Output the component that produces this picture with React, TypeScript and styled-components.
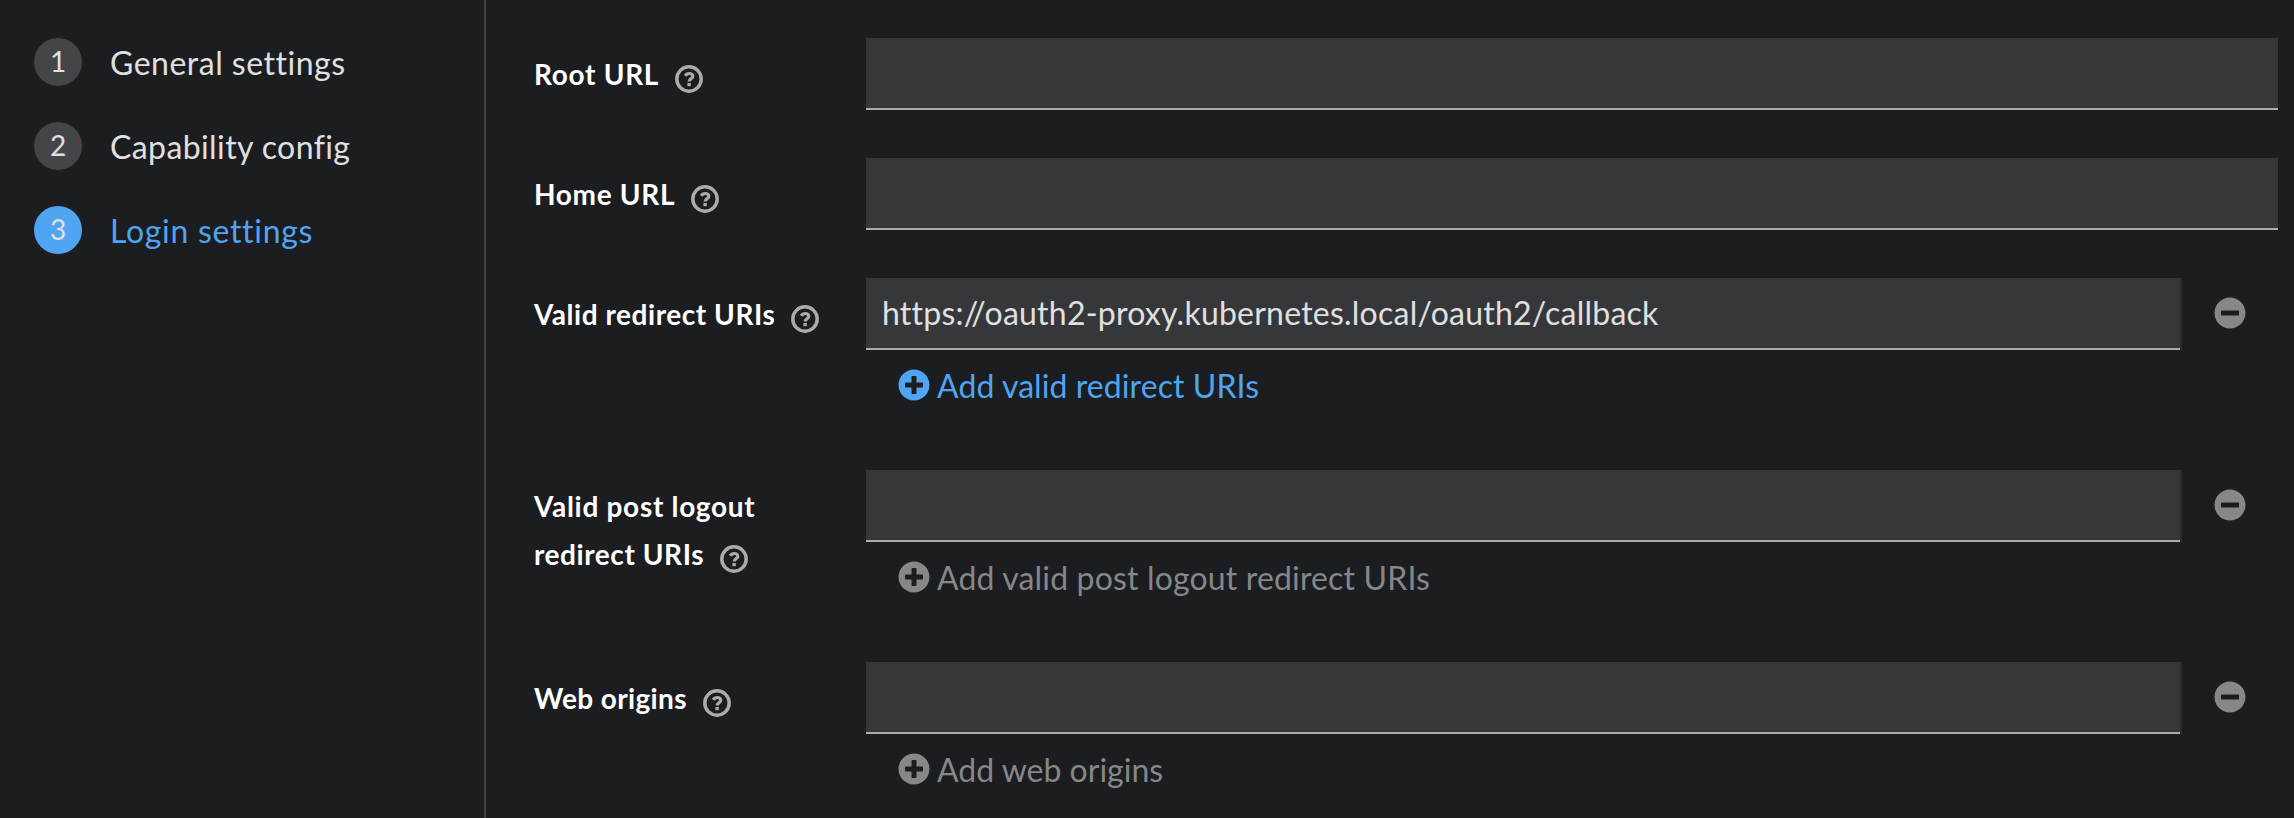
import React from "react";
import styled, { createGlobalStyle } from "styled-components";
import { FaMinusCircle, FaPlusCircle } from "react-icons/fa";

const color = {
  page: "#1b1d21",
  field: "#36373a",
  fieldLine: "#aaabac",
  divider: "#444548",
  text: "#e0e0e0",
  label: "#ffffff",
  accent: "#4fa5f1",
  muted: "#868789",
};

const GlobalStyle = createGlobalStyle`
  * { box-sizing: border-box; }
  body {
    margin: 0;
    background: ${color.page};
    color: ${color.text};
    font-family: Lato, "Liberation Sans", sans-serif;
    font-size: 32px;
    font-variant-ligatures: none;
  }
`;

const Page = styled.div`
  display: flex;
  height: 818px;
  overflow: hidden;
`;

const WizardNav = styled.ol`
  flex: none;
  width: 486px;
  margin: 0;
  padding: 38px 0 0 34px;
  border-right: 2px solid ${color.divider};
  display: flex;
  flex-direction: column;
  gap: 36px;
  list-style: none;
`;

const Step = styled.li<{ $current?: boolean }>`
  display: flex;
  align-items: center;
  gap: 28px;
  height: 48px;
  color: ${(p) => (p.$current ? color.accent : color.text)};
`;

const StepNumber = styled.span<{ $current?: boolean }>`
  width: 48px;
  height: 48px;
  border-radius: 50%;
  background: ${(p) => (p.$current ? color.accent : color.divider)};
  color: ${color.text};
  font-size: 28px;
  line-height: 47px;
  text-align: center;
`;

const StepName = styled.span<{ $tracking: number }>`
  line-height: 48px;
  padding-top: 1px;
  letter-spacing: ${(p) => p.$tracking}px;
  white-space: nowrap;
`;

const Form = styled.form`
  flex: 1;
  min-width: 0;
  padding: 38px 16px 0 48px;
  display: flex;
  flex-direction: column;
  gap: 48px;
`;

const FormGroup = styled.div<{ $multi?: boolean }>`
  display: grid;
  grid-template-columns: 332px 1fr;
  flex: none;
  height: ${(p) => (p.$multi ? 144 : 72)}px;
`;

const Label = styled.label`
  padding-top: 12px;
  color: ${color.label};
  font-size: 28px;
  font-weight: 700;
  line-height: 48px;
  white-space: nowrap;
`;

const LabelLine = styled.span<{ $tracking: number }>`
  display: flex;
  letter-spacing: ${(p) => p.$tracking}px;
`;

const HelpGlyph = styled.svg`
  width: 28px;
  height: 28px;
  margin: 15px 0 0 16px;
  color: ${color.fieldLine};
`;

const Control = styled.div`
  min-width: 0;
`;

const InputRow = styled.div`
  display: flex;
`;

const TextInput = styled.input<{ $tracking?: number }>`
  flex: 1;
  min-width: 0;
  height: 72px;
  padding: 0 16px 1px;
  border: 0;
  border-bottom: 2px solid ${color.fieldLine};
  border-radius: 0;
  outline: 0;
  background: ${color.field};
  color: ${color.text};
  font: inherit;
  letter-spacing: ${(p) => p.$tracking ?? 0}px;
`;

const RemoveButton = styled.button`
  width: 98px;
  height: 72px;
  padding: 0 0 2px 32px;
  border: 0;
  border-left: 2px solid #292b2e;
  background: none;
  color: ${color.muted};
  display: flex;
  align-items: center;
  font-size: 32px;
`;

const AddButton = styled.button<{ $enabled?: boolean; $tracking: number }>`
  display: flex;
  align-items: center;
  gap: 7px;
  height: 50px;
  margin: 10px 0 0 32px;
  padding: 0;
  border: 0;
  background: none;
  color: ${(p) => (p.$enabled ? color.accent : color.muted)};
  font: inherit;
  letter-spacing: ${(p) => p.$tracking}px;
  white-space: nowrap;
`;

const HelpIcon = () => (
  <HelpGlyph viewBox="0 0 28 28" fill="none" stroke="currentColor">
    <circle cx="14" cy="14" r="12.2" strokeWidth="3.5" />
    <path
      d="M10.2 10.9C11.1 9.3 12.3 8.5 14.2 8.5C16.3 8.5 17.8 9.7 17.8 11.3C17.8 13.7 14.1 13.5 14.1 16.6"
      strokeWidth="3.2"
    />
    <path d="M14.1 18V21.2" strokeWidth="3.4" />
  </HelpGlyph>
);

type Line = { text: string; tracking: number };

interface FieldProps {
  lines: Line[];
  value?: string;
  valueTracking?: number;
  add?: Line & { enabled?: boolean };
}

const Field = ({ lines, value = "", valueTracking, add }: FieldProps) => (
  <FormGroup $multi={!!add}>
    <Label>
      {lines.map((line, i) => (
        <LabelLine key={line.text} $tracking={line.tracking}>
          {line.text}
          {i === lines.length - 1 && <HelpIcon />}
        </LabelLine>
      ))}
    </Label>
    <Control>
      <InputRow>
        <TextInput defaultValue={value} $tracking={valueTracking} spellCheck={false} />
        {add && (
          <RemoveButton type="button" aria-label="Remove">
            <FaMinusCircle />
          </RemoveButton>
        )}
      </InputRow>
      {add && (
        <AddButton type="button" $enabled={add.enabled} $tracking={add.tracking}>
          <FaPlusCircle />
          {add.text}
        </AddButton>
      )}
    </Control>
  </FormGroup>
);

const steps: Line[] = [
  { text: "General settings", tracking: 0.5 },
  { text: "Capability config", tracking: 0.4 },
  { text: "Login settings", tracking: 0.7 },
];

export default function App() {
  return (
    <>
      <GlobalStyle />
      <Page>
        <WizardNav>
          {steps.map((step, i) => (
            <Step key={step.text} $current={i === 2}>
              <StepNumber $current={i === 2}>{i + 1}</StepNumber>
              <StepName $tracking={step.tracking}>{step.text}</StepName>
            </Step>
          ))}
        </WizardNav>
        <Form>
          <Field lines={[{ text: "Root URL", tracking: 0.7 }]} />
          <Field lines={[{ text: "Home URL", tracking: 0.67 }]} />
          <Field
            lines={[{ text: "Valid redirect URIs", tracking: 0.54 }]}
            value="https://oauth2-proxy.kubernetes.local/oauth2/callback"
            valueTracking={0.23}
            add={{ text: "Add valid redirect URIs", tracking: 0.08, enabled: true }}
          />
          <Field
            lines={[
              { text: "Valid post logout", tracking: 0.7 },
              { text: "redirect URIs", tracking: 0.56 },
            ]}
            add={{ text: "Add valid post logout redirect URIs", tracking: 0.16 }}
          />
          <Field
            lines={[{ text: "Web origins", tracking: 0.35 }]}
            add={{ text: "Add web origins", tracking: 0 }}
          />
        </Form>
      </Page>
    </>
  );
}
